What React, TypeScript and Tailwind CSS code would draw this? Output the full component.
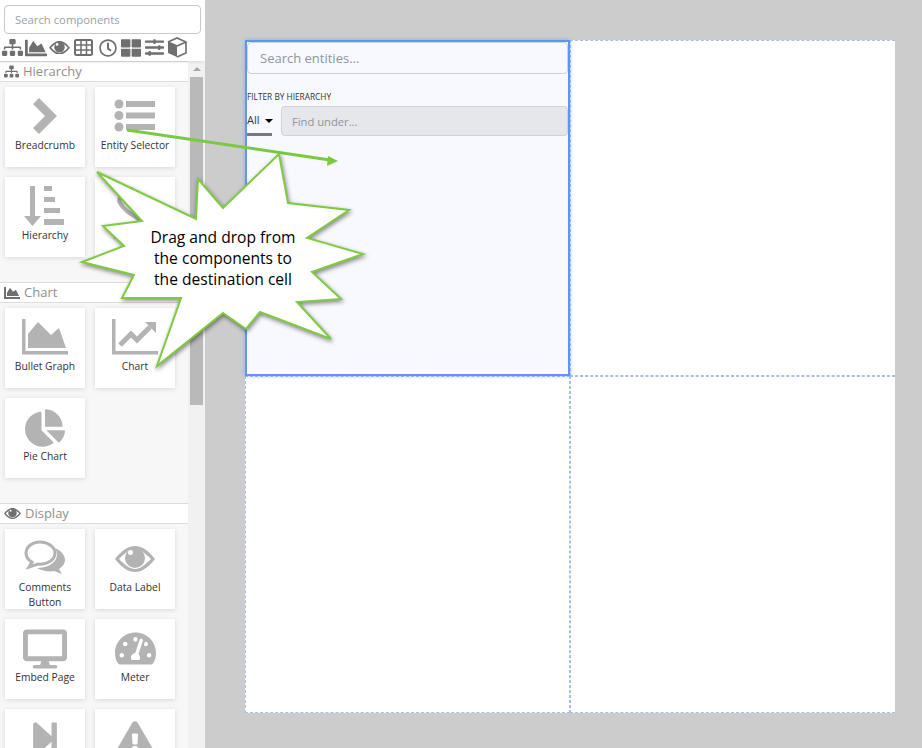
import React from "react";
import {
  FaChartArea,
  FaChartPie,
  FaDesktop,
  FaExclamationTriangle,
  FaRegClock,
  FaSitemap,
  FaSlidersH,
  FaStepForward,
  FaTachometerAlt,
  FaThLarge,
} from "react-icons/fa";

const FONT = "font-['Open_Sans','Noto_Sans',sans-serif]";

const STAR_POINTS =
  "97,172 196,219 198,179 223,208 279,154 288,203 349,210 307,238 363,254 312,272 341,299 297,302 331,339 260,312 246,329 223,313 157,366 181,298 122,298 134,275 82,262 124,246 103,226 142,221";

const EyeIcon: React.FC<{ width: number; className?: string }> = ({ width, className }) => (
  <svg width={width} height={(width * 26) / 40} viewBox="0 0 40 26" className={className}>
    <path
      fill="currentColor"
      fillRule="evenodd"
      d="M0 13 C8 3 14 0 20 0 C26 0 32 3 40 13 C32 23 26 26 20 26 C14 26 8 23 0 13Z M4 13 C10 19 15 23 20 23 C25 23 30 19 36 13 C30 7 25 3 20 3 C15 3 10 7 4 13Z"
    />
    <circle cx="20" cy="12" r="10" fill="currentColor" />
    <circle cx="15.5" cy="6.5" r="2.5" fill="white" />
  </svg>
);

const TableIcon = () => (
  <svg width="19" height="17" viewBox="0 0 19 17">
    <rect x="1" y="1" width="17" height="15" rx="1.5" fill="none" stroke="currentColor" strokeWidth="2" />
    <path d="M1 6 H18 M1 11 H18 M7 1 V16 M12.5 1 V16" fill="none" stroke="currentColor" strokeWidth="1.5" />
  </svg>
);

const CubeIcon = () => (
  <svg width="20" height="21" viewBox="0 0 20 21">
    <polygon points="1,5 10,9 10,20 1,16" fill="currentColor" />
    <path d="M1 5 L10 1 L19 5 L19 16 L10 20 M10 9 L19 5 M1 5 L10 9" fill="none" stroke="currentColor" strokeWidth="1.6" />
  </svg>
);

const Breadcrumb = () => (
  <svg width="40" height="40" viewBox="0 0 40 40" className="text-[#b3b3b3]">
    <polygon fill="currentColor" points="14,1 32,19 14,37 8,31 20,19 8,7" />
  </svg>
);

const EntitySelector = () => (
  <svg width="42" height="36" viewBox="0 0 42 36" className="text-[#b3b3b3]">
    <g fill="currentColor">
      <circle cx="5" cy="5" r="4.5" />
      <circle cx="5" cy="16.5" r="4.5" />
      <circle cx="5" cy="28" r="4.5" />
      <rect x="12" y="2" width="29" height="6" />
      <rect x="12" y="13.5" width="29" height="6" />
      <rect x="12" y="25" width="29" height="6" />
    </g>
  </svg>
);

const HierarchyIcon = () => (
  <svg width="42" height="42" viewBox="0 0 42 42" className="text-[#b3b3b3]">
    <g fill="currentColor">
      <rect x="6" y="0" width="5" height="32" />
      <polygon points="0,30 17,30 8.5,40" />
      <rect x="20" y="0" width="8" height="5" />
      <rect x="20" y="11" width="11" height="5" />
      <rect x="20" y="22" width="16" height="5" />
      <rect x="20" y="33" width="20" height="6" />
    </g>
  </svg>
);

const HiddenTree = () => (
  <svg width="40" height="40" viewBox="0 0 40 40" className="text-[#b3b3b3]">
    <path
      d="M18 1 C8 4 2 12 5 16 C8 22 14 26 25 33"
      fill="none"
      stroke="currentColor"
      strokeWidth="4"
    />
  </svg>
);

const BulletGraph = () => (
  <svg width="46" height="38" viewBox="0 0 46 38" className="text-[#b3b3b3]">
    <g fill="currentColor">
      <rect x="0" y="0" width="3.5" height="35" />
      <rect x="0" y="32" width="46" height="3.5" />
      <polygon points="6,29 6,15 16,3 29,16 37,9 44,29" />
    </g>
  </svg>
);

const ChartIcon = () => (
  <svg width="46" height="38" viewBox="0 0 46 38" className="text-[#b3b3b3]">
    <g fill="currentColor">
      <rect x="0" y="0" width="3.5" height="35" />
      <rect x="0" y="32" width="46" height="3.5" />
      <polygon points="33,3 44,3 44,14" />
    </g>
    <polyline
      points="8,26 19,15 25,21 38,8"
      fill="none"
      stroke="currentColor"
      strokeWidth="5"
    />
  </svg>
);

const CommentsIcon = () => (
  <svg width="42" height="38" viewBox="0 0 42 38" className="text-[#b3b3b3]">
    <path
      fill="currentColor"
      d="M31 8 C38 11 41 16 41 20 C41 24 38 27 35 29 L38 34 L30 31 C25 32 18 31 13 28 C22 28 33 24 33 14 C33 12 32 10 31 8Z"
    />
    <path
      fill="white"
      stroke="currentColor"
      strokeWidth="3"
      d="M16 2 C8 2 2 7 2 13 C2 17 4 20 8 22 L5 27 L14 24 C23 25 31 20 31 13 C31 7 24 2 16 2Z"
    />
  </svg>
);

interface CardData {
  label: string;
  icon: React.ReactNode;
}

const ICON = "text-[#b3b3b3]";

const sections: { title: string; icon: React.ReactNode; cards: CardData[] }[] = [
  {
    title: "Hierarchy",
    icon: <FaSitemap size={15} />,
    cards: [
      { label: "Breadcrumb", icon: <Breadcrumb /> },
      { label: "Entity Selector", icon: <EntitySelector /> },
      { label: "Hierarchy", icon: <HierarchyIcon /> },
      { label: "Tree View", icon: <HiddenTree /> },
    ],
  },
  {
    title: "Chart",
    icon: <FaChartArea size={16} />,
    cards: [
      { label: "Bullet Graph", icon: <BulletGraph /> },
      { label: "Chart", icon: <ChartIcon /> },
      { label: "Pie Chart", icon: <FaChartPie size={40} className={ICON} /> },
    ],
  },
  {
    title: "Display",
    icon: <EyeIcon width={17} />,
    cards: [
      { label: "Comments Button", icon: <CommentsIcon /> },
      { label: "Data Label", icon: <EyeIcon width={40} className={ICON} /> },
      { label: "Embed Page", icon: <FaDesktop size={44} className={ICON} /> },
      { label: "Meter", icon: <FaTachometerAlt size={41} className={ICON} /> },
      { label: "Next", icon: <FaStepForward size={38} className={ICON} /> },
      { label: "Warning", icon: <FaExclamationTriangle size={40} className={ICON} /> },
    ],
  },
];

const Card: React.FC<CardData> = ({ label, icon }) => (
  <div className="w-20 h-20 bg-white shadow-[0_1px_5px_rgba(0,0,0,0.13)] flex flex-col items-center">
    <div className="h-[51px] pt-2 w-full flex items-center justify-center shrink-0">
      {icon}
    </div>
    <div className="text-[10.3px] leading-[15px] text-[#333] text-center px-2 -mx-2">
      {label}
    </div>
  </div>
);

const Sidebar = () => (
  <div className="w-[205px] h-full shrink-0 bg-[#f7f7f7] flex flex-col overflow-hidden">
    <div className="h-[61px] shrink-0 bg-white shadow-[0_1px_3px_rgba(0,0,0,0.1)] z-10 pt-[5px] pl-1 pr-1">
      <input
        placeholder="Search components"
        className="w-full h-[29px] border border-[#c8c8c8] rounded-[4px] px-[10px] text-[11.3px] bg-white placeholder:text-[#9a9fa8] outline-none"
      />
      <div className="flex items-center h-[21px] mt-[3px] -ml-[2px] text-[#6f6f6f]">
        <FaSitemap size={21} />
        <FaChartArea size={22} className="ml-[2px]" />
        <EyeIcon width={21} className="ml-[2px]" />
        <div className="ml-[4px]">
          <TableIcon />
        </div>
        <FaRegClock size={18} className="ml-[6px]" />
        <FaThLarge size={20} className="ml-[4px]" />
        <FaSlidersH size={19} className="ml-[4px]" />
        <div className="ml-[3px]">
          <CubeIcon />
        </div>
      </div>
    </div>
    <div className="flex flex-1 min-h-0">
      <div className="w-[188px] shrink-0 overflow-hidden">
        {sections.map((section) => (
          <div key={section.title} className="pb-[25px]">
            <div className="h-[21px] bg-white border-y border-[#dcdcdc] flex items-center gap-[4px] pl-1 text-[#8f8f8f] text-[13px]">
              <span className="text-[#6f6f6f]">{section.icon}</span>
              {section.title}
            </div>
            <div className="grid grid-cols-[80px_80px] gap-[10px] pl-[5px] pt-[5px]">
              {section.cards.map((card) => (
                <Card key={card.label} {...card} />
              ))}
            </div>
          </div>
        ))}
      </div>
      <div className="w-[17px] shrink-0 bg-[#f1f1f1] flex flex-col items-center">
        <div className="h-[16px] flex items-center justify-center">
          <div className="w-0 h-0 border-x-[4px] border-x-transparent border-b-[4px] border-b-[#a6a6a6]" />
        </div>
        <div className="w-[13px] h-[328px] bg-[#b9b9b9]" />
      </div>
    </div>
  </div>
);

const SelectedCell = () => (
  <div className="h-full border-2 border-[#6495ed] bg-[#f8f9ff] shadow-[0_0_4px_rgba(100,149,237,0.6)] relative">
    <input
      placeholder="Search entities..."
      className="block w-full h-[32px] border border-[#cfd0d8] rounded-[4px] px-3 text-[13px] bg-transparent placeholder:text-[#8f949c] outline-none"
    />
    <div className="mt-[17px] text-[8.3px] leading-[12px] text-[#333]">
      FILTER BY HIERARCHY
    </div>
    <div className="flex mt-[3px]">
      <div className="w-[25px] h-[30px] pt-[2px] border-b-[3px] border-[#77777c] flex items-center gap-[5px] text-[11px] text-[#333]">
        All
        <div className="w-0 h-0 border-x-[4px] border-x-transparent border-t-[4px] border-t-black" />
      </div>
      <input
        placeholder="Find under..."
        className="ml-[9px] flex-1 min-w-0 h-[30px] border border-[#cfd0d8] rounded-[4px] px-[10px] text-[11.2px] bg-[#e6e7ea] placeholder:text-[#8f949c] outline-none"
      />
    </div>
  </div>
);

const Canvas = () => (
  <div className="flex-1 min-w-0 h-full bg-[#cccccc] pl-10 pt-10">
    <div className="w-[650px] h-[673px] bg-white grid grid-cols-2 grid-rows-[336px_337px]">
      <SelectedCell />
      <div className="border border-r-0 border-dashed border-[#a8bfee]" />
      <div className="border border-dashed border-[#a8bfee]" />
      <div className="border border-r-0 border-dashed border-[#a8bfee]" />
    </div>
  </div>
);

const Annotation = () => (
  <>
    <svg width="922" height="748" className="absolute left-0 top-0 pointer-events-none">
      <line x1="127" y1="130" x2="330" y2="160" stroke="#7ac943" strokeWidth="3" />
      <polygon points="338,161 328,156 327,166" fill="#7ac943" />
      <polygon
        points={STAR_POINTS}
        fill="white"
        stroke="#7fcb3f"
        strokeWidth="2"
        className="drop-shadow-[1px_2px_2px_rgba(0,0,0,0.45)]"
      />
    </svg>
    <div className="absolute left-[123px] top-[227px] w-[200px] text-center text-[15.6px] leading-[21px] text-black">
      Drag and drop from
      <br />
      the components to
      <br />
      the destination cell
    </div>
  </>
);

const App: React.FC = () => {
  return (
    <div className={`relative flex w-[922px] h-[748px] overflow-hidden ${FONT}`}>
      <Sidebar />
      <Canvas />
      <Annotation />
    </div>
  );
};

export default App;
